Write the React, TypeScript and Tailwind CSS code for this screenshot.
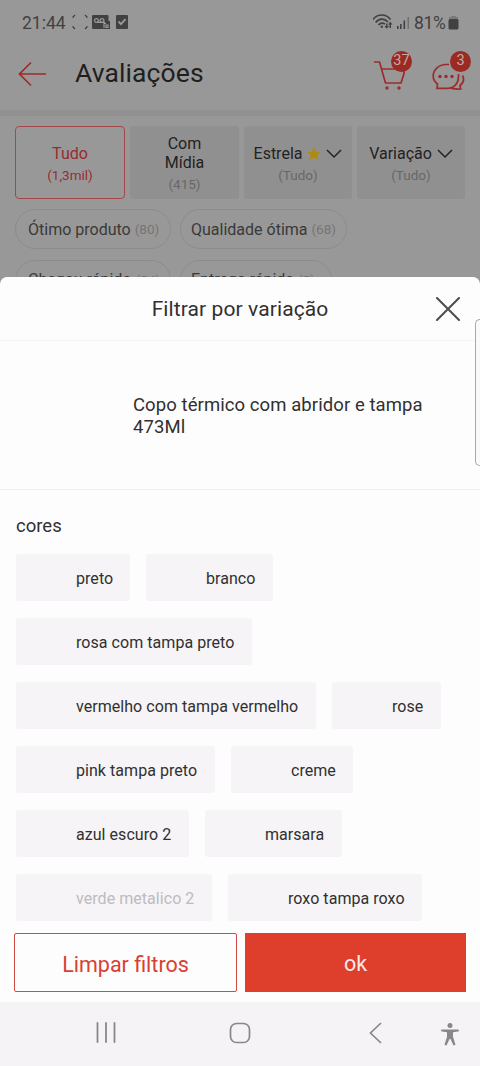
import type { ReactNode } from "react";
import clsx from "clsx";

const rows = [
  [{ name: "preto", w: "w-[114px]" }, { name: "branco", w: "w-[127px]" }],
  [{ name: "rosa com tampa preto", w: "w-[236px]" }],
  [{ name: "vermelho com tampa vermelho", w: "w-[300px]" }, { name: "rose", w: "w-[109px]" }],
  [{ name: "pink tampa preto", w: "w-[199px]" }, { name: "creme", w: "w-[122px]" }],
  [{ name: "azul escuro 2", w: "w-[173px]" }, { name: "marsara", w: "w-[137px]" }],
  [{ name: "verde metalico 2", w: "w-[196px]", disabled: true }, { name: "roxo tampa roxo", w: "w-[194px]" }],
];

function StatusBar() {
  return (
    <div className="flex h-[45px] items-center pl-[22px] pr-[21px] text-[#414141]">
      <span className="w-[44px] text-[17.5px] leading-5 whitespace-nowrap">21:44</span>
      <svg className="-mt-px ml-[6px]" width="56" height="16" viewBox="0 0 56 16">
        <g fill="none" stroke="currentColor" strokeWidth="1.2">
          <path d="M1 4V3l2-2M13 1l2 2v1M15 12v1l-2 2M3 15l-2-2v-1" />
        </g>
        <path fill="currentColor" d="M21 1h14.500a1 1 0 0 1 1 1v5H38v8H21a1 1 0 0 1-1-1V2a1 1 0 0 1 1-1zM45 1h10a1 1 0 0 1 1 1v12a1 1 0 0 1-1 1H45a1 1 0 0 1-1-1V2a1 1 0 0 1 1-1z" />
        <g fill="none" stroke="#999" strokeWidth="1.200">
          <circle cx="24.500" cy="6.500" r="1.900" />
          <circle cx="30" cy="6.500" r="1.900" />
          <path d="M25 8.400h8M32 14V9.500h2M34 11h2v2.500h-2z" />
          <path strokeWidth="1.900" d="m46.500 7.500 2.500 2.700 4.500-5" />
        </g>
      </svg>
      <svg className="-mt-px ml-auto" width="38" height="18" viewBox="0 0 38 18">
        <g fill="none" stroke="currentColor" strokeWidth="1.700">
          <path d="M0 6.500c4.500-6 13-6 17.500 0M2.700 9.500c3.500-4.300 8.800-4.300 12.300-.5M5.500 12c1.800-2.200 4.300-2.400 6.500-1" />
        </g>
        <circle cx="8.800" cy="13.800" r="1.200" fill="currentColor" />
        <path fill="currentColor" d="M13 10.500h1.500V13H16l-2.300 2.800L11.500 13H13zM18 15h-1.500v-3.500H15l2.200-2.700 2.300 2.700H18z" />
        <path fill="currentColor" d="M24 13h1.600v3H24zM27 11h1.600v5H27zM30.500 7.500h1.600V16h-1.600z" />
        <path fill="currentColor" opacity=".45" d="M34.500 4H36v12h-1.500z" />
      </svg>
      <span className="ml-[3px] w-[33px] text-[17.5px] leading-5 tracking-[-0.3px] whitespace-nowrap">81%</span>
      <svg className="ml-[1px]" width="11" height="15" viewBox="0 0 11 15">
        <path fill="currentColor" opacity=".35" d="M3 1h5v1h2v3H1V2h2z" />
        <rect x=".5" y="4" width="10" height="10.500" rx="1.500" fill="currentColor" />
      </svg>
    </div>
  );
}

function Badge({ children }: { children: ReactNode }) {
  return (
    <span className="absolute -top-[10px] left-[17px] flex size-[21px] items-center justify-center rounded-full bg-[#9b2a23] text-[14.5px] leading-none text-[#c2abaa]">
      {children}
    </span>
  );
}

function Header() {
  return (
    <header className="flex h-[65px] items-center pl-[18px] text-[#9c2c2b]">
      <svg className="-mt-[8px]" width="29" height="26" viewBox="0 0 29 26" fill="none" stroke="currentColor" strokeWidth="1.700">
        <path d="M28 13H1.500M13 1.500 1.500 13 13 24.500" />
      </svg>
      <h1 className="-mt-[9px] ml-[28px] text-[26.5px] leading-8 tracking-[0.1px] text-[#1f1f1f]">Avaliações</h1>
      <div className="relative -mt-[5px] ml-auto h-[29px] w-[33px]">
        <svg width="33" height="29" viewBox="0 0 33 29" fill="none" stroke="currentColor" strokeWidth="1.700">
          <path d="M0 1h5.500l6 21H27l3-9.500V8H7.500" />
          <circle cx="13" cy="27" r="1.700" fill="currentColor" stroke="none" />
          <circle cx="25" cy="27" r="1.700" fill="currentColor" stroke="none" />
        </svg>
        <Badge>37</Badge>
      </div>
      <div className="relative -mt-[5px] ml-[26px] mr-[14px] h-[29px] w-[33px]">
        <svg className="-ml-px" width="33" height="29" viewBox="0 0 33 29" fill="none" stroke="currentColor" strokeWidth="1.700">
          <path d="M17 3.500h-3C7 3.500 1.200 8.500 1.200 15c0 3.500 1.600 6 4.300 8L5 27.300h11c6 0 10.500-5 10.500-11.500V13M30.500 14.500c2 4 1 7.500-2.500 10l.7 3.500c-4 .2-8 .2-11-1.500" />
          <g fill="currentColor" stroke="none">
            <circle cx="8" cy="15.500" r="1.700" />
            <circle cx="14" cy="15.500" r="1.700" />
            <circle cx="20" cy="15.500" r="1.700" />
          </g>
        </svg>
        <Badge>3</Badge>
      </div>
    </header>
  );
}

function Chevron() {
  return (
    <svg width="16" height="10" viewBox="0 0 16 10" fill="none" stroke="#242424" strokeWidth="1.500">
      <path d="m1 1 7 7 7-7" />
    </svg>
  );
}

function Tag({ label, count, className }: { label: string; count: string; className: string }) {
  return (
    <div className={clsx("flex h-[40px] items-center rounded-full border border-[#8d8c8c] text-[16px] whitespace-nowrap text-[#393939]", className)}>
      <span>{label}</span>
      <span className="ml-[4px] text-[13.5px] text-[#757474]">{count}</span>
    </div>
  );
}

function Filters() {
  return (
    <div className="border-t-[6px] border-[#929191] pt-[10px] pl-[15px]">
      <div className="flex h-[73px] text-center text-[16px] leading-[19px] text-[#222]">
        <div className="w-[110px] rounded-[4px] border border-[#a4484b] pt-[17px] text-[#952c30]">
          <div>Tudo</div>
          <div className="mt-[3px] text-[13.5px]">(1,3mil)</div>
        </div>
        <div className="ml-[5px] w-[109px] rounded-[3px] bg-[#919090] pt-[8px]">
          <div>Com<br />Mídia</div>
          <div className="mt-[3px] text-[13.5px] text-[#686767]">(415)</div>
        </div>
        <div className="ml-[5px] w-[108px] rounded-[3px] bg-[#919090] pt-[18px]">
          <div className="flex items-center justify-center">
            <span>Estrela</span>
            <svg className="mx-[5px]" width="14" height="14" viewBox="0 0 14 14">
              <path fill="#b08a10" stroke="#b08a10" strokeLinejoin="round" d="m7 1 1.700 4 4.300.3-3.300 2.800 1.100 4.400L7 10.200l-3.800 2.300 1.100-4.400L1 5.300 5.300 5z" />
            </svg>
            <Chevron />
          </div>
          <div className="mt-[3px] text-[13.5px] text-[#686767]">(Tudo)</div>
        </div>
        <div className="ml-[5px] w-[108px] rounded-[3px] bg-[#919090] pt-[18px]">
          <div className="flex items-center justify-center gap-[5px]">
            <span>Variação</span>
            <Chevron />
          </div>
          <div className="mt-[3px] text-[13.5px] text-[#686767]">(Tudo)</div>
        </div>
      </div>
      <div className="mt-[10px] flex gap-[9px]">
        <Tag label="Ótimo produto" count="(80)" className="w-[156px] pt-px pl-[12px]" />
        <Tag label="Qualidade ótima" count="(68)" className="w-[167px] pt-px pl-[10px]" />
      </div>
      <div className="mt-[11px] flex gap-[9px]">
        <Tag label="Chegou rápido" count="(54)" className="w-[156px] pl-[12px]" />
        <Tag label="Entrega rápida" count="(5)" className="w-[152px] pl-[10px]" />
      </div>
    </div>
  );
}

function VariationSheet() {
  return (
    <section className="relative h-[725px] rounded-t-[7px] bg-[#fefdfe] text-[#303030]">
      <div className="flex h-[64px] items-center border-b border-[#f4f2f4]">
        <h2 className="w-full pt-[2px] text-center text-[21px] tracking-[0.1px]">Filtrar por variação</h2>
        <svg className="absolute top-[20px] right-[20px]" width="24" height="24" viewBox="0 0 24 24" fill="none" stroke="#4c4b4d" strokeWidth="2" strokeLinecap="round">
          <path d="m1 1 22 22M23 1 1 23" />
        </svg>
      </div>
      <div className="flex h-[149px] items-center border-b border-[#eeecee] pt-[2px] pl-[133px]">
        <p className="w-[310px] text-[18.5px] leading-[22px] tracking-[0.08px]">Copo térmico com abridor e tampa 473Ml</p>
      </div>
      {/* edge panel handle of the phone */}
      <div className="absolute top-[42px] right-0 h-[147px] w-[5px] rounded-l-[5px] border border-r-0 border-[#a9a8aa] bg-[#fbfafb]" />
      <div className="px-[16px]">
        <h3 className="pt-[25px] text-[18.5px] leading-[22px]">cores</h3>
        <div className="mt-[17px] space-y-[17px]">
          {rows.map((row, i) => (
            <div key={i} className="flex gap-[16px]">
              {row.map((c) => (
                <div
                  key={c.name}
                  className={clsx(
                    "flex h-[47px] items-center rounded-[3px] bg-[#f6f4f6] pt-[2px] pl-[60px] text-[16px] tracking-[0.05px] whitespace-nowrap",
                    c.w,
                    "disabled" in c && "text-[#bdbcbe]"
                  )}
                >
                  {c.name}
                </div>
              ))}
            </div>
          ))}
        </div>
      </div>
      <div className="mt-[12px] flex gap-[8px] pl-[14px]">
        <button className="h-[59px] w-[223px] rounded-[2px] border border-[#cf4a40] pt-[5px] text-[21.5px] text-[#d8412f]">Limpar filtros</button>
        <button className="h-[59px] w-[221px] bg-[#de3e2c] pt-[3px] text-[21.5px] text-[#fbe9e7]">ok</button>
      </div>
    </section>
  );
}

function NavBar() {
  return (
    <nav className="flex h-[64px] items-center bg-[#f5f3f6] pb-[3px] pl-[96px] text-[#88878a]">
      <svg width="20" height="21" viewBox="0 0 20 21" fill="none" stroke="currentColor" strokeWidth="1.800" strokeLinecap="round">
        <path d="M1.500 1v19M10 1v19M18.500 1v19" />
      </svg>
      <svg className="ml-[113px]" width="22" height="22" viewBox="0 0 22 22" fill="none" stroke="currentColor" strokeWidth="1.700">
        <rect x="1.500" y="1.500" width="19" height="19" rx="6" />
      </svg>
      <svg className="ml-[118px]" width="13" height="22" viewBox="0 0 13 22" fill="none" stroke="currentColor" strokeWidth="1.700">
        <path d="M12 1 1.500 11 12 21" />
      </svg>
      <svg className="mt-[4px] ml-[59px]" width="18" height="23" viewBox="0 0 18 23" fill="currentColor">
        <circle cx="9" cy="2.500" r="2.500" />
        <path d="M1 6.500h16a1 1 0 0 1 0 2l-5 .8v4.500l2.500 8-2 .7L9.500 16h-1l-3 6.500-2-.7 2.500-8V9.300l-5-.8a1 1 0 0 1 0-2z" />
      </svg>
    </nav>
  );
}

export default function App() {
  return (
    <div className="h-[1066px] w-[480px] overflow-hidden bg-[#999898] font-['Roboto',sans-serif]">
      <div className="h-[277px] overflow-hidden">
        <StatusBar />
        <Header />
        <Filters />
      </div>
      <VariationSheet />
      <NavBar />
    </div>
  );
}
